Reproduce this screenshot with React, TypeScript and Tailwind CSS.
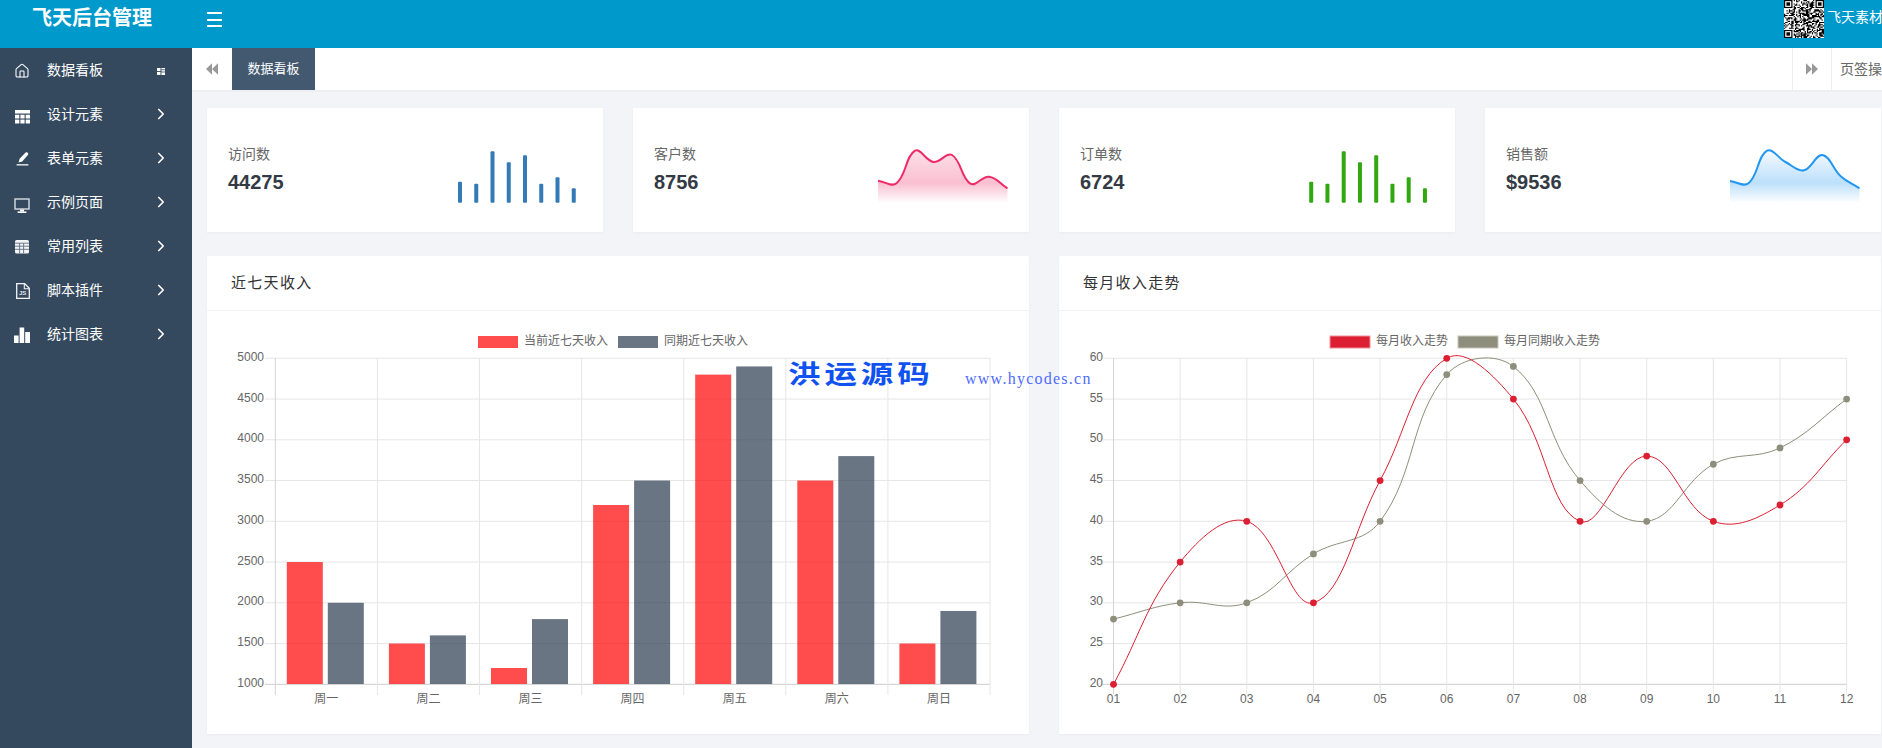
import React from 'react';
import { ChevronRight, House } from 'lucide-react';

type Pt = [number, number];

// same spline chart.js uses for a line with tension
const spline = (pts: Pt[], t = 0.4) => {
    const ctrl = pts.map((p, i) => {
        const a = pts[i - 1] ?? p;
        const b = pts[i + 1] ?? p;
        const d01 = Math.hypot(p[0] - a[0], p[1] - a[1]);
        const d12 = Math.hypot(b[0] - p[0], b[1] - p[1]);
        const sum = d01 + d12 || 1;
        const fa = (t * d01) / sum;
        const fb = (t * d12) / sum;
        return {
            prev: [p[0] - fa * (b[0] - a[0]), p[1] - fa * (b[1] - a[1])],
            next: [p[0] + fb * (b[0] - a[0]), p[1] + fb * (b[1] - a[1])],
        };
    });
    let d = `M${pts[0][0]} ${pts[0][1]}`;
    for (let i = 1; i < pts.length; i++) {
        const c1 = ctrl[i - 1].next;
        const c2 = ctrl[i].prev;
        d += `C${c1[0]} ${c1[1]} ${c2[0]} ${c2[1]} ${pts[i][0]} ${pts[i][1]}`;
    }
    return d;
};

const TableIcon = () => (
    <svg width="15" height="14" viewBox="0 0 15 14" className="mt-[6px]" fill="#fff">
        <rect x="0" y="0" width="15" height="3.5" />
        <rect x="0" y="4.7" width="4.3" height="3.8" />
        <rect x="5.4" y="4.7" width="4.2" height="3.8" />
        <rect x="10.7" y="4.7" width="4.3" height="3.8" />
        <rect x="0" y="9.6" width="4.3" height="3.9" />
        <rect x="5.4" y="9.6" width="4.2" height="3.9" />
        <rect x="10.7" y="9.6" width="4.3" height="3.9" />
    </svg>
);

const PenIcon = () => (
    <svg width="14" height="14" viewBox="0 0 14 14" className="mt-[2px] ml-[1px]" fill="#fff">
        <path d="M9.6 0.6c.7-.5 1.6-.4 2.2.2s.6 1.5.1 2.2L6.2 9.6 2.6 10.6l1-3.8z" />
        <rect x="0.6" y="12" width="11.8" height="1.6" fill="#d5d9de" />
    </svg>
);

const DesktopIcon = () => (
    <svg width="16" height="16" viewBox="0 0 16 16" className="mt-[7px]">
        <rect x="1" y="1" width="14" height="10" fill="none" stroke="#d9dde1" strokeWidth="1.4" />
        <rect x="6" y="11.5" width="4" height="2" fill="#fff" />
        <rect x="3.6" y="13.4" width="8.8" height="1.6" fill="#fff" />
    </svg>
);

const GridIcon = () => (
    <svg width="15" height="14" viewBox="0 0 15 14" className="mt-[1px]">
        <rect x="0" y="0" width="14" height="13.5" rx="1.6" fill="#f4f5f6" />
        <path d="M0 3.2h14M0 6.2h14M0 9.3h14M4.6 3.2v10.3M8.6 3.2v10.3" stroke="#5d6e81" strokeWidth="0.9" />
    </svg>
);

const JsIcon = () => (
    <svg width="14" height="16" viewBox="0 0 14 16" className="mt-[1px] ml-[1px]">
        <path d="M.7.7h8l4.6 4.6v10H.7z" fill="none" stroke="#f2f3f5" strokeWidth="1.3" />
        <path d="M8.3.7v5h5" fill="none" stroke="#f2f3f5" strokeWidth="1.1" />
        <text x="3" y="12.4" fontSize="6" fontWeight="700" fill="#e6e9ec">JS</text>
    </svg>
);

const BarsIcon = () => (
    <svg width="16" height="16" viewBox="0 0 16 16" className="mt-[2px] -ml-[1px]" fill="#fff">
        <rect x="0" y="8.5" width="4.6" height="7.5" />
        <rect x="5.6" y="0.5" width="4.6" height="15.5" />
        <rect x="11.2" y="5" width="4.8" height="11" />
    </svg>
);

const HomeIcon = () => <House size={16} strokeWidth={1.6} color="#fff" className="mt-[2px]" />;

const menus: { label: string; icon: React.ReactNode; dot?: boolean }[] = [
    { label: '数据看板', icon: <HomeIcon />, dot: true },
    { label: '设计元素', icon: <TableIcon /> },
    { label: '表单元素', icon: <PenIcon /> },
    { label: '示例页面', icon: <DesktopIcon /> },
    { label: '常用列表', icon: <GridIcon /> },
    { label: '脚本插件', icon: <JsIcon /> },
    { label: '统计图表', icon: <BarsIcon /> },
];

const Sidebar = () => (
    <aside className="w-[192px] shrink-0 bg-[#34495e] text-white">
        {menus.map((m) => (
            <div key={m.label} className="flex h-[44px] items-center">
                <div className="ml-[14px] flex w-[16px] justify-center">{m.icon}</div>
                <span className="ml-[17px] text-[14px] leading-5">{m.label}</span>
                {m.dot ? (
                    <svg width="8" height="7" viewBox="0 0 8 7" className="ml-auto mr-[27px] mt-[3px]" fill="#fff">
                        <rect x="0" y="0" width="3.5" height="3" />
                        <rect x="4.4" y="0" width="3.6" height="1.4" />
                        <rect x="4.4" y="2.2" width="3.6" height="1.4" />
                        <rect x="0" y="3.9" width="3.5" height="3" />
                        <rect x="4.4" y="4.4" width="3.6" height="2.6" />
                    </svg>
                ) : (
                    <ChevronRight size={18} strokeWidth={2.2} className="ml-auto mr-[22px]" />
                )}
            </div>
        ))}
    </aside>
);

// fake qr, only has to look like one at 40px
const QrCode = () => {
    const n = 33;
    let seed = 90127;
    let d = '';
    const inFinder = (x: number, y: number) =>
        (x < 8 && y < 8) || (x > n - 9 && y < 8) || (x < 8 && y > n - 9);
    for (let y = 0; y < n; y++) {
        for (let x = 0; x < n; x++) {
            seed = (seed * 1103515245 + 12345) & 0x7fffffff;
            if (!inFinder(x, y) && (seed >> 16) % 2 === 0) d += `M${x} ${y}h1v1h-1z`;
        }
    }
    const finder = (x: number, y: number) => (
        <g key={`${x}-${y}`}>
            <rect x={x} y={y} width="7" height="7" fill="#000" />
            <rect x={x + 1} y={y + 1} width="5" height="5" fill="#fff" />
            <rect x={x + 2} y={y + 2} width="3" height="3" fill="#000" />
        </g>
    );
    return (
        <svg width="40" height="38" viewBox="0 0 33 33" preserveAspectRatio="none" className="shrink-0">
            <rect width="33" height="33" fill="#fff" />
            <path d={d} fill="#000" />
            {finder(0, 0)}
            {finder(26, 0)}
            {finder(0, 26)}
        </svg>
    );
};

const Header = () => (
    <header className="flex h-[48px] shrink-0 bg-[#0099cc] text-white">
        <div className="w-[192px] shrink-0 pl-[32px] pt-[4px] text-[20px] font-bold leading-7">飞天后台管理</div>
        <div className="ml-[15px] mt-[12px] flex h-[15px] w-[15px] flex-col justify-between">
            <span className="h-[2px] bg-white" />
            <span className="h-[2px] bg-white" />
            <span className="h-[2px] bg-white" />
        </div>
        <div className="ml-auto flex items-start gap-[3px]">
            <QrCode />
            <span className="w-[55px] overflow-hidden whitespace-nowrap pt-[7px] text-[14px] leading-5">飞天素材</span>
        </div>
    </header>
);

const Backward = ({ flip }: { flip?: boolean }) => (
    <svg width="12" height="12" viewBox="0 0 12 12" fill="#999" className={flip ? 'rotate-180' : ''}>
        <path d="M6 0.3v11.4L0 6zM12 0.3v11.4L6 6z" />
    </svg>
);

const TabBar = () => (
    <div className="flex h-[44px] shrink-0 border-b-2 border-[#eeeff2] bg-white">
        <div className="flex w-[40px] items-center justify-center">
            <Backward />
        </div>
        <div className="flex w-[83px] items-center justify-center bg-[#43596f] text-[13px] text-white">数据看板</div>
        <div className="ml-auto flex w-[40px] items-center justify-center border-x border-[#eeeff2]">
            <Backward flip />
        </div>
        <div className="w-[50px] overflow-hidden whitespace-nowrap pl-[8px] text-[14px] leading-[42px] text-[#666]">页签操作</div>
    </div>
);

const sparkTops = [181.7, 183.7, 151.3, 162.3, 155.3, 183.7, 177.3, 188.3];

const SparkBars = ({ x0, color, left }: { x0: number; color: string; left: number }) => (
    <svg width="130" height="76" viewBox={`${left} 132 130 76`}>
        {sparkTops.map((t, i) => (
            <rect key={i} x={x0 + i * 16.25 - 2} y={t} width="4" height={202.7 - t} rx="1" fill={color} />
        ))}
    </svg>
);

const SparkLine = ({ id, left, ys, color, stops }: { id: string; left: number; ys: number[]; color: string; stops: number[] }) => {
    const pts = ys.map((y, i) => [left + 1 + (i * 129.5) / 7, y] as Pt);
    const line = spline(pts);
    const last = pts[pts.length - 1];
    return (
        <svg width="131" height="76" viewBox={`${left} 132 131 76`}>
            <defs>
                <linearGradient id={id} gradientUnits="userSpaceOnUse" x1="0" y1="150" x2="0" y2="203">
                    <stop offset="0" stopColor={color} stopOpacity={stops[0]} />
                    <stop offset="0.62" stopColor={color} stopOpacity={stops[1]} />
                    <stop offset="1" stopColor={color} stopOpacity="0" />
                </linearGradient>
            </defs>
            <path d={`${line}L${last[0]} 204L${pts[0][0]} 204Z`} fill={`url(#${id})`} />
            <path d={line} fill="none" stroke={color} strokeWidth="2" />
        </svg>
    );
};

const StatCard = ({ label, value, chart }: { label: string; value: string; chart: React.ReactNode }) => (
    <div className="flex h-[124px] items-center bg-white pl-[21px] pr-[21px] shadow-[0_1px_3px_rgba(0,0,0,0.04)]">
        <div className="pb-[4px]">
            <div className="mb-[8px] text-[14px] leading-5 text-[#666]">{label}</div>
            <div className="text-[20px] font-bold leading-5 text-[#333a44]">{value}</div>
        </div>
        <div className="ml-auto">{chart}</div>
    </div>
);

const yOf = (i: number) => 358.3 + (i * 326) / 8;

const ChartFrame = ({ children, legend }: { children: React.ReactNode; legend: React.ReactNode }) => (
    <svg width="822" height="423" viewBox="0 0 822 423" className="block">
        {legend}
        {children}
    </svg>
);

const BarChart = () => {
    const ox = 207;
    const oy = 311;
    const xs = Array.from({ length: 8 }, (_, i) => 275.3 + i * 102.1);
    const labels = ['周一', '周二', '周三', '周四', '周五', '周六', '周日'];
    const red = [2500, 1500, 1200, 3200, 4800, 3500, 1500];
    const grey = [2000, 1600, 1800, 3500, 4900, 3800, 1900];
    const y = (v: number) => 684.3 - ((v - 1000) / 4000) * 326;
    return (
        <ChartFrame
            legend={
                <g fontSize="12" fill="#666">
                    <rect x={478 - ox} y={336 - oy} width="40" height="12" fill="#ff4d4d" />
                    <text x={524 - ox} y={344.5 - oy}>当前近七天收入</text>
                    <rect x={618 - ox} y={336 - oy} width="40" height="12" fill="#6a7683" />
                    <text x={664 - ox} y={344.5 - oy}>同期近七天收入</text>
                </g>
            }
        >
            <g transform={`translate(${-ox} ${-oy})`}>
                {Array.from({ length: 9 }, (_, i) => (
                    <g key={i}>
                        <line x1="265" x2="990" y1={yOf(i)} y2={yOf(i)} stroke={i === 8 ? '#ccc' : '#e6e6e6'} />
                        <text x="264" y={yOf(i) + 2.5} textAnchor="end" fontSize="12" fill="#666">{5000 - i * 500}</text>
                    </g>
                ))}
                {xs.map((x, i) => (
                    <line key={x} x1={x} x2={x} y1="358" y2="695" stroke={i === 0 ? '#d4d4d4' : '#e6e6e6'} />
                ))}
                {labels.map((l, i) => (
                    <g key={l}>
                        <rect x={xs[i] + 11.5} y={y(red[i])} width="36" height={684 - y(red[i])} fill="rgba(255,0,0,0.7)" />
                        <rect x={xs[i] + 52.5} y={y(grey[i])} width="36" height={684 - y(grey[i])} fill="rgba(42,59,78,0.7)" />
                        <text x={xs[i] + 51} y="703" textAnchor="middle" fontSize="12" fill="#666">{l}</text>
                    </g>
                ))}
            </g>
        </ChartFrame>
    );
};

const LineChart = () => {
    const ox = 1059;
    const oy = 311;
    const red = [20, 35, 40, 30, 45, 60, 55, 40, 48, 40, 42, 50];
    const grey = [28, 30, 30, 36, 40, 58, 59, 45, 40, 47, 49, 55];
    const months = ['01', '02', '03', '04', '05', '06', '07', '08', '09', '10', '11', '12'];
    const x = (i: number) => 1113.5 + i * 66.65;
    const y = (v: number) => 684.3 - ((v - 20) / 40) * 326;
    const toPts = (d: number[]) => d.map((v, i) => [x(i), y(v)] as Pt);
    const series = [
        { pts: toPts(grey), color: '#8e8e7c' },
        { pts: toPts(red), color: '#dc1f32' },
    ];
    return (
        <ChartFrame
            legend={
                <g fontSize="12" fill="#666">
                    <rect x={1330 - ox} y={336 - oy} width="40" height="12" fill="#dc1f32" stroke="#ee8f98" />
                    <text x={1376 - ox} y={344.5 - oy}>每月收入走势</text>
                    <rect x={1458 - ox} y={336 - oy} width="40" height="12" fill="#8e8e7c" stroke="#c7c7bd" />
                    <text x={1504 - ox} y={344.5 - oy}>每月同期收入走势</text>
                </g>
            }
        >
            <g transform={`translate(${-ox} ${-oy})`}>
                {Array.from({ length: 9 }, (_, i) => (
                    <g key={i}>
                        <line x1="1103" x2="1847" y1={yOf(i)} y2={yOf(i)} stroke={i === 8 ? '#ccc' : '#e6e6e6'} />
                        <text x="1103" y={yOf(i) + 2.5} textAnchor="end" fontSize="12" fill="#666">{60 - i * 5}</text>
                    </g>
                ))}
                {months.map((m, i) => (
                    <g key={m}>
                        <line x1={x(i)} x2={x(i)} y1="358" y2="694" stroke={i === 0 ? '#d4d4d4' : '#e6e6e6'} />
                        <text x={x(i)} y="703" textAnchor="middle" fontSize="12" fill="#666">{m}</text>
                    </g>
                ))}
                {series.map((s) => (
                    <g key={s.color}>
                        <path d={spline(s.pts)} fill="none" stroke={s.color} strokeWidth="1" />
                        {s.pts.map((p) => (
                            <circle key={p[0]} cx={p[0]} cy={p[1]} r="3.4" fill={s.color} />
                        ))}
                    </g>
                ))}
            </g>
        </ChartFrame>
    );
};

const Panel = ({ title, children }: { title: string; children: React.ReactNode }) => (
    <div className="col-span-2 h-[478px] bg-white shadow-[0_1px_3px_rgba(0,0,0,0.04)]">
        <div className="h-[55px] border-b border-[#f2f2f2] pl-[24px] text-[15px] leading-[54px] tracking-[1.3px] text-[#333]">{title}</div>
        {children}
    </div>
);

export default function App() {
    return (
        <div className="relative flex h-[748px] w-[1882px] flex-col overflow-hidden bg-[#f3f4f8] font-['Liberation_Sans','Noto_Sans_CJK_SC',sans-serif]">
            <Header />
            <div className="flex min-h-0 flex-1">
                <Sidebar />
                <main className="flex min-w-0 flex-1 flex-col">
                    <TabBar />
                    <div className="grid grid-cols-[396px_396px_396px_396px] gap-x-[30px] gap-y-[24px] pl-[15px] pt-[16px]">
                        <StatCard label="访问数" value="44275" chart={<SparkBars left={452} x0={460} color="#337ab7" />} />
                        <StatCard
                            label="客户数"
                            value="8756"
                            chart={<SparkLine id="pinkFill" left={877} ys={[180.7, 183.3, 150.7, 162, 155, 183.7, 176.7, 188.3]} color="#ef2a68" stops={[0.14, 0.3]} />}
                        />
                        <StatCard label="订单数" value="6724" chart={<SparkBars left={1304} x0={1311.2} color="#31a80f" />} />
                        <StatCard
                            label="销售额"
                            value="$9536"
                            chart={<SparkLine id="blueFill" left={1729} ys={[181, 183.3, 150.7, 162, 170.3, 155, 176.5, 188.3]} color="#2196f3" stops={[0.04, 0.3]} />}
                        />
                        <Panel title="近七天收入">
                            <BarChart />
                        </Panel>
                        <Panel title="每月收入走势">
                            <LineChart />
                        </Panel>
                    </div>
                </main>
            </div>
            {/* watermark sits over the charts */}
            <div className="absolute left-[788px] top-[358px] origin-left scale-x-[1.3] whitespace-nowrap text-[25px] font-bold leading-8 tracking-[3px] text-[#0f52f0]">洪运源码</div>
            <div className="absolute left-[965px] top-[369px] whitespace-nowrap font-['Liberation_Serif',serif] text-[16px] leading-5 tracking-[1.25px] text-[#4f6bff]">www.hycodes.cn</div>
        </div>
    );
}
